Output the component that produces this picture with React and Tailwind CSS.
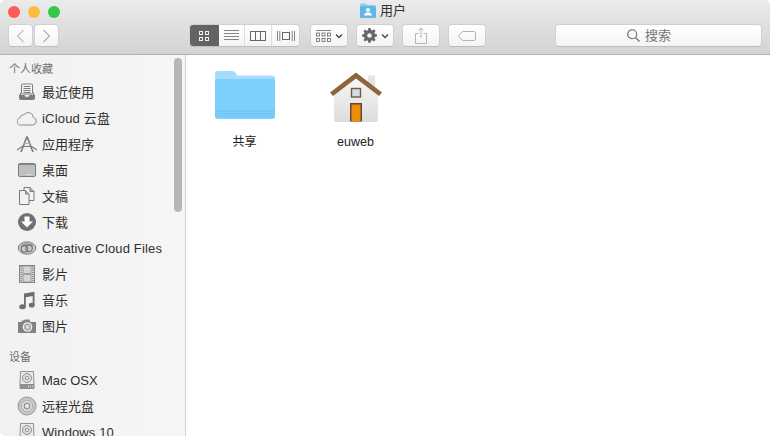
import React from "react";

const G = "#7a7a7a";

const Recents = () => (
  <svg width="20" height="20" viewBox="0 0 20 20" fill="none">
    <rect x="4.500" y="2" width="11" height="10" rx="1" fill="#f4f4f4" stroke={G} />
    <path d="M6.500 4.500h7M6.500 6.500h7M6.500 8.500h7M6.500 10.500h7" stroke={G} />
    <path d="M4 10 2 13.500V16a2 2 0 0 0 2 2h12a2 2 0 0 0 2-2v-2.500L16 10v3h-3.500a2.500 2 0 0 1-5 0H4z" fill={G} />
  </svg>
);
const Cloud = () => (
  <svg width="20" height="20" viewBox="0 0 20 20" fill="none">
    <path d="M4.500 17h11a3.800 3.800 0 0 0 .8-7.500 5 5 0 0 0-9.300-2.600 3.300 3.300 0 0 0-3.800 3A3.600 3.600 0 0 0 4.500 17z" stroke="#808080" strokeWidth="0.900" />
  </svg>
);
const Apps = () => (
  <svg width="22" height="20" viewBox="0 0 22 20" fill="none" className="-mx-[1px]">
    <path d="M11 2.500 5 18M11 2.500 17 18" stroke={G} strokeWidth="1.600" />
    <path d="M1 16 6 12.500h10L21 16" stroke={G} strokeWidth="1.100" />
    <path d="M7.500 9.500h7" stroke="#b0b0b0" strokeWidth="1" />
  </svg>
);
const Desktop = () => (
  <svg width="20" height="20" viewBox="0 0 20 20" fill="none">
    <rect x="1.500" y="3.500" width="17" height="13" rx="1.500" fill="#e8e8e8" stroke={G} />
    <rect x="2" y="4" width="16" height="1.500" fill="#8a8a8a" />
    <rect x="2" y="5.500" width="16" height="10.500" fill="#c0c0c0" />
    <path d="M9.500 14.500h1M11.500 14.500h1M13.500 14.500h1" stroke="#fff" />
  </svg>
);
const Docs = () => (
  <svg width="20" height="20" viewBox="0 0 20 20" fill="none">
    <path d="M7 1.500h6l4 4v9h-10z" fill="#f2f2f2" stroke={G} />
    <path d="M13 1.500v4h4" fill="#aaa" stroke={G} />
    <path d="M2.500 4.500h6l3.500 3.500v10.500h-9.500z" fill="#f2f2f2" stroke={G} />
    <path d="M8.500 4.500V8H12" fill="#bbb" stroke={G} />
  </svg>
);
const Download = () => (
  <svg width="20" height="20" viewBox="0 0 20 20">
    <circle cx="10" cy="10" r="9" fill="#707070" />
    <path d="M7.500 4.500h5v5H16L10 15.500 4 9.500h3.500z" fill="#fff" />
  </svg>
);
const CC = () => (
  <svg width="20" height="20" viewBox="0 0 20 20" fill="none">
    <ellipse cx="10" cy="10" rx="8.700" ry="6.200" fill="#cdcdcd" stroke={G} />
    <circle cx="7.500" cy="10.800" r="3.300" stroke={G} strokeWidth="1.300" />
    <circle cx="12" cy="10.300" r="3.300" stroke={G} strokeWidth="1.300" />
    <path d="M4 8.500c2-3 9-3.800 12-.5" stroke={G} />
  </svg>
);
const Film = () => (
  <svg width="20" height="20" viewBox="0 0 20 20" fill="none">
    <rect x="2.500" y="1.500" width="15" height="17" fill="#e6e6e6" stroke="#858585" />
    <rect x="6" y="2" width="8" height="7.500" fill="#d6d6d6" stroke="#858585" strokeWidth="0.700" />
    <rect x="6" y="10.500" width="8" height="7.500" fill="#d6d6d6" stroke="#858585" strokeWidth="0.700" />
    <path d="M4.300 2v16M15.700 2v16" stroke="#8f8f8f" strokeWidth="2" strokeDasharray="1.200 0.800" />
  </svg>
);
const Music = () => (
  <svg width="20" height="20" viewBox="0 0 20 20">
    <path d="M7 3.500 17.500 1.800v13.500h-1.800V6l-6.900 1.200V17H7z" fill="#6e6e6e" />
    <ellipse cx="5.500" cy="16.800" rx="3.300" ry="2.500" fill="#6e6e6e" />
    <ellipse cx="14.700" cy="15.200" rx="2.900" ry="2.400" fill="#6e6e6e" />
  </svg>
);
const Camera = () => (
  <svg width="20" height="20" viewBox="0 0 20 20">
    <path d="M1 6h3.500l.5-1.500h2L8 3.500h4.500l1 2.500H19v11H1z" fill="#828282" />
    <circle cx="10.500" cy="11" r="4.800" fill="#eee" />
    <circle cx="10.500" cy="11" r="3.400" fill="#a0a0a0" />
    <circle cx="10.500" cy="11" r="2" fill="#dcdcdc" />
  </svg>
);
const Disk = () => (
  <svg width="20" height="20" viewBox="0 0 20 20" fill="none">
    <path d="M3.500 1.500h13l.5 13H3z" fill="#e9e9e9" stroke="#939393" />
    <rect x="2.500" y="14" width="15" height="5" rx="1" fill="#8f8f8f" />
    <path d="M11 16.500h5" stroke="#ddd" strokeDasharray="1 1" strokeWidth="1.500" />
    <circle cx="10" cy="8" r="4.500" stroke="#939393" fill="#dcdcdc" />
    <circle cx="10" cy="8" r="1.700" stroke="#939393" fill="#eee" />
  </svg>
);
const CD = () => (
  <svg width="20" height="20" viewBox="0 0 20 20" fill="none">
    <circle cx="10" cy="10" r="9" fill="#c6c6c6" stroke="#949494" />
    <circle cx="10" cy="10" r="5.500" fill="#e4e4e4" stroke="#ababab" />
    <circle cx="10" cy="10" r="3" fill="#d2d2d2" stroke="#858585" />
    <circle cx="10" cy="10" r="1.200" fill="#f5f5f5" />
  </svg>
);

const TitleFolder = () => (
  <svg width="16" height="15" viewBox="0 0 16 15">
    <path d="M0 2A1.500 1.500 0 0 1 1.500.5H6L7.500 2H14.500A1.500 1.500 0 0 1 16 3.500V5H0z" fill="#8ccdf0" />
    <rect x="0" y="3" width="16" height="12" rx="1.500" fill="#62b7e8" />
    <circle cx="8" cy="7" r="2" fill="#fff" fillOpacity="0.95" />
    <path d="M4 12.500c.3-2.500 2-3 4-3s3.700.5 4 3z" fill="#fff" fillOpacity="0.95" />
  </svg>
);

const BigFolder = () => (
  <svg width="60" height="48" viewBox="0 0 60 48">
    <path d="M0 3a3 3 0 0 1 3-3h14c2 0 3 1 4 2.500L22 4.500h35a3 3 0 0 1 3 3V12H0z" fill="#a3dcff" />
    <path d="M0 10a2 2 0 0 1 2-2h56a2 2 0 0 1 2 2v35a3 3 0 0 1-3 3H3a3 3 0 0 1-3-3z" fill="#7ecffc" />
    <path d="M0 40h60M0 42.500h60M0 45h60" stroke="#6cbdf0" strokeWidth="0.800" />
  </svg>
);

const Home = () => (
  <svg width="52" height="52" viewBox="0 0 52 52">
    <defs>
      <linearGradient id="wall" x1="0" y1="0" x2="0" y2="1">
        <stop offset="0" stopColor="#f8f8f8" />
        <stop offset="1" stopColor="#dcdcdc" />
      </linearGradient>
    </defs>
    <rect x="38" y="4.500" width="7" height="16" fill="#e4e4e4" />
    <path d="M4 23 26 6l22 17v26a2 2 0 0 1-2 2H6a2 2 0 0 1-2-2z" fill="url(#wall)" />
    <path d="M0 21.500 26 1.500l26 20-3 3.500L26 7.500 3 25z" fill="#8c6539" />
    <rect x="21.500" y="17.500" width="9" height="8.500" fill="#d2dde8" stroke="#6f5b44" strokeWidth="1.400" />
    <rect x="20" y="32" width="12" height="18.500" fill="#5e4a30" />
    <rect x="21.500" y="33.500" width="9" height="17" fill="#f08a09" />
  </svg>
);

const Chevron = () => (
  <svg width="8" height="6" viewBox="0 0 8 6" fill="none">
    <path d="M1 1.500 4 4.500 7 1.500" stroke="#444" strokeWidth="1.300" />
  </svg>
);

const btn = "flex h-[23px] items-center justify-center rounded-[4px] border border-[#d0d0d0] border-b-[#bdbdbd] bg-gradient-to-b from-[#ffffff] to-[#f4f4f4]";

const Item = ({ icon, label, cls = "" }) => (
  <div className="flex h-[26px] items-center gap-[5px] pl-[17px]">
    <span className="flex w-[20px] shrink-0 justify-center">{icon}</span>
    <span className={`pt-[1px] text-[13px] whitespace-nowrap text-[#2f2f2f] ${cls}`}>{label}</span>
  </div>
);

const Head = ({ label, cls = "" }) => (
  <div className={`flex h-[20px] items-center pl-[9px] text-[11px] text-[#6e6e6e] ${cls}`}>{label}</div>
);

export default function App() {
  return (
    <div
      className="flex h-[436px] w-[770px] flex-col overflow-hidden rounded-[5px] bg-white"
      style={{ fontFamily: '"Liberation Sans", "Noto Sans CJK SC", sans-serif' }}
    >
      <header className="h-[55px] shrink-0 border-b border-[#b1b1b1] bg-gradient-to-b from-[#ebebeb] to-[#d3d3d3]">
        <div className="grid h-[23px] grid-cols-[1fr_auto_1fr] items-center pr-[4px]">
          <div className="flex items-center gap-[8px] pl-[8px]">
            <span className="h-[12px] w-[12px] rounded-full bg-[#fc5b57]" />
            <span className="h-[12px] w-[12px] rounded-full bg-[#fdbc40]" />
            <span className="h-[12px] w-[12px] rounded-full bg-[#34c84a]" />
          </div>
          <div className="flex items-center gap-[4px] pb-[2px] text-[13px] leading-[16px] text-[#333]">
            <TitleFolder />
            <span>用户</span>
          </div>
          <div />
        </div>
        <div className="flex items-center pt-[1px] pl-[8px]">
          <div className="flex gap-[1px]">
            <div className={`${btn} w-[25px]`}>
              <svg width="9" height="14" viewBox="0 0 9 14" fill="none"><path d="M7.500 1 1.500 7l6 6" stroke="#c2c2c2" strokeWidth="1.300" /></svg>
            </div>
            <div className={`${btn} w-[25px]`}>
              <svg width="9" height="14" viewBox="0 0 9 14" fill="none"><path d="M1.500 1l6 6-6 6" stroke="#b5b5b5" strokeWidth="1.300" /></svg>
            </div>
          </div>
          <div className="ml-[130px] flex h-[23px] w-[111px] overflow-hidden rounded-[4px] border border-[#d0d0d0] border-b-[#bdbdbd] bg-gradient-to-b from-[#ffffff] to-[#f4f4f4]">
            <div className="-my-[1px] -ml-[1px] flex w-[30px] items-center justify-center bg-[#636363]">
              <svg width="12" height="12" viewBox="0 0 12 12" fill="none" stroke="#f4f4f4" strokeWidth="1">
                <rect x="1.500" y="1.500" width="3" height="3" /><rect x="7.500" y="1.500" width="3" height="3" />
                <rect x="1.500" y="7.500" width="3" height="3" /><rect x="7.500" y="7.500" width="3" height="3" />
              </svg>
            </div>
            <div className="flex w-[26px] items-center justify-center border-r border-[#dcdcdc]">
              <svg width="15" height="11" viewBox="0 0 15 11" stroke="#666" strokeWidth="0.800"><path d="M0 .5h15M0 3.500h15M0 6.500h15M0 9.500h15" /></svg>
            </div>
            <div className="flex w-[27px] items-center justify-center border-r border-[#dcdcdc]">
              <svg width="16" height="10" viewBox="0 0 16 10" fill="none" stroke="#666"><rect x=".5" y=".5" width="15" height="9" /><path d="M5.500 0v10M10.500 0v10" /></svg>
            </div>
            <div className="flex flex-1 items-center justify-center">
              <svg width="18" height="10" viewBox="0 0 18 10" fill="none" stroke="#666"><rect x="5.500" y="1.500" width="7" height="7" /><path d="M.5 0v10M2.800 0v10M15.200 0v10M17.500 0v10" strokeWidth="0.800" /></svg>
            </div>
          </div>
          <div className={`${btn} ml-[10px] w-[38px] gap-[4px]`}>
            <svg width="15" height="12" viewBox="0 0 15 12" fill="none" stroke="#666" strokeWidth="0.800">
              <path d="M0 .5h15" />
              <rect x=".5" y="3" width="3" height="3" /><rect x="6" y="3" width="3" height="3" /><rect x="11.500" y="3" width="3" height="3" />
              <rect x=".5" y="8.500" width="3" height="3" /><rect x="6" y="8.500" width="3" height="3" /><rect x="11.500" y="8.500" width="3" height="3" />
            </svg>
            <Chevron />
          </div>
          <div className={`${btn} ml-[8px] w-[38px] gap-[4px]`}>
            <svg width="15" height="15" viewBox="0 0 15 15">
              <path d="M6.300 0h2.400l.3 2 1.300.5 1.600-1.200 1.700 1.700-1.200 1.600.5 1.300 2 .3v2.400l-2 .3-.5 1.300 1.200 1.600-1.700 1.700-1.600-1.200-1.300.5-.3 2H6.300l-.3-2-1.300-.5-1.600 1.200L1.400 12l1.200-1.600-.5-1.300-2-.3V6.400l2-.3.5-1.300L1.400 3.200 3.100 1.500l1.600 1.200L6 2.200z" fill="#666" />
              <circle cx="7.500" cy="7.500" r="2.300" fill="#f4f4f4" />
            </svg>
            <Chevron />
          </div>
          <div className={`${btn} ml-[8px] w-[38px]`}>
            <svg width="12" height="17" viewBox="0 0 12 17" fill="none" stroke="#b4b4b4"><path d="M3.500 6.500H.5v10h11v-10h-3M6 11V1M3.500 3.500 6 1l2.500 2.500" /></svg>
          </div>
          <div className={`${btn} ml-[8px] w-[38px]`}>
            <svg width="18" height="10" viewBox="0 0 18 10" fill="none" stroke="#b4b4b4"><path d="M4.500.5H16a1.500 1.500 0 0 1 1.500 1.500v6A1.500 1.500 0 0 1 16 9.500H4.500L.5 5z" /></svg>
          </div>
          <div className={`${btn} ml-[69px] w-[207px] gap-[5px] pr-[19px] text-[13px] text-[#777]`}>
            <svg width="13" height="13" viewBox="0 0 13 13" fill="none" stroke="#666" strokeWidth="1.100"><circle cx="5.200" cy="5.200" r="4.500" /><path d="M8.500 8.500 12.500 12.500" /></svg>
            <span>搜索</span>
          </div>
        </div>
      </header>

      <div className="flex min-h-0 flex-1">
        <aside className="relative w-[186px] shrink-0 overflow-hidden border-r border-[#d2d2d2] bg-gradient-to-r from-[#f1f1f1] to-[#f6f6f6] pt-[4px]">
          <Head label="个人收藏" />
          <Item icon={<Recents />} label="最近使用" />
          <Item icon={<Cloud />} label="iCloud 云盘" cls="tracking-[0.2px]" />
          <Item icon={<Apps />} label="应用程序" />
          <Item icon={<Desktop />} label="桌面" />
          <Item icon={<Docs />} label="文稿" />
          <Item icon={<Download />} label="下载" />
          <Item icon={<CC />} label="Creative Cloud Files" cls="tracking-[0.15px]" />
          <Item icon={<Film />} label="影片" />
          <Item icon={<Music />} label="音乐" />
          <Item icon={<Camera />} label="图片" />
          <Head label="设备" cls="mt-[8px]" />
          <Item icon={<Disk />} label="Mac OSX" />
          <Item icon={<CD />} label="远程光盘" />
          <Item icon={<Disk />} label="Windows 10" cls="tracking-[0.1px]" />
          <div className="absolute top-[3px] left-[174px] h-[154px] w-[8px] rounded-full bg-[#b6b6b6]" />
        </aside>
        <main className="flex flex-1 items-start bg-white pt-[16px] pl-[3px]">
          <div className="flex w-[111px] flex-col items-center">
            <div className="flex h-[52px] items-start"><BigFolder /></div>
            <span className="mt-[10px] text-[12px] leading-[18px] text-[#222]">共享</span>
          </div>
          <div className="flex w-[111px] flex-col items-center">
            <div className="flex h-[52px] items-start"><Home /></div>
            <span className="mt-[10px] text-[12.5px] leading-[18px] text-[#222]">euweb</span>
          </div>
        </main>
      </div>
    </div>
  );
}
